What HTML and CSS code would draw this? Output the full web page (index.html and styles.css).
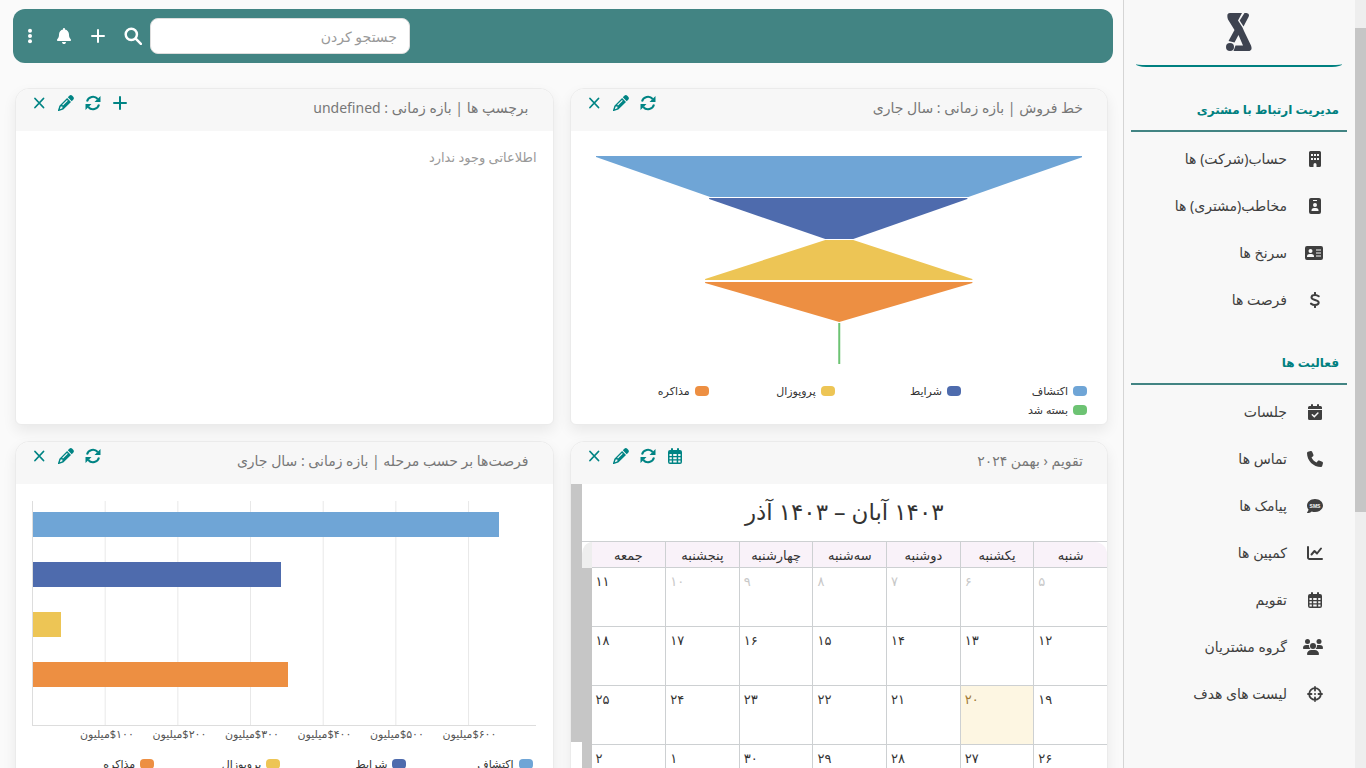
FILE: index.html
```html
<!DOCTYPE html>
<html lang="fa" dir="rtl">
<head>
<meta charset="utf-8">
<title>داشبورد</title>
<link rel="stylesheet" href="styles.css">
</head>
<body>
<svg class="sprite" aria-hidden="true">
  <symbol id="close" viewBox="0 0 16 16"><path d="M4 3.500l8.500 9M12.500 3.500l-8.500 9" fill="none" stroke="currentColor" stroke-width="1.800" stroke-linecap="round"/></symbol>
  <symbol id="pen" viewBox="0 0 16 16"><path fill-rule="evenodd" d="M11.300.8a2.200 2.200 0 0 1 3 0l.9.900a2.200 2.200 0 0 1 0 3l-1.500 1.500L9.800 2.300zM9.100 3l3.900 3.900-7.700 7.700L.8 16a.6.600 0 0 1-.8-.8L1.400 10.700zM2.700 11.600l-.9 2.600 2.600-.9v-1.700zM9 5L4.200 9.800l.8.800L9.800 5.800z"/></symbol>
  <symbol id="sync" viewBox="0 0 16 16"><path d="M2 6.500A6.200 6.200 0 0 1 12.700 4M14 9.500A6.200 6.200 0 0 1 3.300 12" fill="none" stroke="currentColor" stroke-width="2"/><path d="M15.500 1v6H9.500zM.5 15V9h6z"/></symbol>
  <symbol id="plus" viewBox="0 0 16 16"><path d="M8 2v12M2 8h12" fill="none" stroke="currentColor" stroke-width="2" stroke-linecap="round"/></symbol>
  <symbol id="search" viewBox="0 0 16 16"><path d="M11.500 6.500a5 5 0 1 1-10 0 5 5 0 0 1 10 0zM10.400 10.400L15 15" fill="none" stroke="currentColor" stroke-width="2.200" stroke-linecap="round"/></symbol>
  <symbol id="dots" viewBox="0 0 16 16"><circle cx="8" cy="2.800" r="2"/><circle cx="8" cy="8" r="2"/><circle cx="8" cy="13.200" r="2"/></symbol>
  <symbol id="bell" viewBox="-32 0 512 512"><path d="M224 0c-17.700 0-32 14.300-32 32l0 19.200C119 66 64 130.600 64 208l0 18.800c0 47-17.300 92.400-48.500 127.600l-7.400 8.300c-8.400 9.400-10.400 22.900-5.300 34.400S19.400 416 32 416l384 0c12.600 0 24-7.400 29.200-18.900s3.100-25-5.300-34.400l-7.400-8.300C401.300 319.200 384 273.900 384 226.800l0-18.800c0-77.400-55-142-128-156.800L256 32c0-17.700-14.300-32-32-32zm45.300 493.300c12-12 18.700-28.300 18.700-45.300l-128 0c0 17 6.700 33.300 18.700 45.300s28.300 18.700 45.300 18.700s33.300-6.700 45.300-18.700z"/></symbol>
  <symbol id="building" viewBox="0 0 16 16"><path fill-rule="evenodd" d="M3.500 0h9A1.500 1.500 0 0 1 14 1.500v13a1.500 1.500 0 0 1-1.500 1.500H9.500v-2.500a1.500 1.500 0 0 0-3 0V16h-3A1.500 1.500 0 0 1 2 14.500v-13A1.500 1.500 0 0 1 3.500 0zM4 3v2h2V3zM7 3v2h2V3zM10 3v2h2V3zM4 7v2h2V7zM7 7v2h2V7zM10 7v2h2V7z"/></symbol>
  <symbol id="badge" viewBox="0 0 16 16"><path fill-rule="evenodd" d="M4 0h8a2 2 0 0 1 2 2v12a2 2 0 0 1-2 2H4a2 2 0 0 1-2-2V2a2 2 0 0 1 2-2zM6 2v1h4V2zM8 5a2 2 0 1 0 0 4 2 2 0 0 0 0-4zM7 10a2.500 2.500 0 0 0-2.500 2.500V13h7v-.5A2.500 2.500 0 0 0 9 10z"/></symbol>
  <symbol id="idcard" viewBox="0 0 18 16"><path fill-rule="evenodd" d="M2 1h14a2 2 0 0 1 2 2v10a2 2 0 0 1-2 2H2a2 2 0 0 1-2-2V3a2 2 0 0 1 2-2zM5.500 4a2 2 0 1 0 0 4 2 2 0 0 0 0-4zM4.500 9A2.500 2.500 0 0 0 2 11.500v.5h7v-.5A2.500 2.500 0 0 0 6.500 9zM11 4.500v1h5v-1zM11 7.500v1h5v-1zM11 10.500v1h5v-1z"/></symbol>
  <symbol id="dollar" viewBox="0 0 16 16"><path d="M8 .8v2.200M8 13v2.200M11.700 4.300C10.500 3.300 9.500 3 8 3 6 3 4.500 3.800 4.500 5.400c0 3.300 7.200 1.700 7.200 5.200C11.700 12.200 10 13 8 13c-1.500 0-3-.6-4-1.400" fill="none" stroke="currentColor" stroke-width="2" stroke-linecap="round"/></symbol>
  <symbol id="calcheck" viewBox="0 0 16 16"><path d="M5 0a1 1 0 0 1 1 1v1h4V1a1 1 0 0 1 2 0v1h1.500A1.500 1.500 0 0 1 15 3.500V5H1V3.500A1.500 1.500 0 0 1 2.500 2H4V1a1 1 0 0 1 1-1zM1 6h14v8.500a1.500 1.500 0 0 1-1.500 1.500h-11A1.500 1.500 0 0 1 1 14.500z"/><path class="cut" d="M5.300 10.800l2 2 3.600-3.700" stroke-width="1.500" stroke-linecap="round"/></symbol>
  <symbol id="phone" viewBox="0 0 512 512"><path d="M164.900 24.600c-7.700-18.600-28-28.500-47.400-23.200l-88 24C12.100 30.200 0 46 0 64C0 311.400 200.600 512 448 512c18 0 33.800-12.100 38.600-29.500l24-88c5.300-19.400-4.600-39.700-23.200-47.400l-96-40c-16.300-6.800-35.200-2.100-46.300 11.600L304.700 368C234.300 334.700 177.300 277.700 144 207.300L193.300 167c13.700-11.200 18.400-30 11.600-46.300l-40-96z"/></symbol>
  <symbol id="sms" viewBox="0 0 16 16"><path d="M8 1c4.400 0 8 2.900 8 6.500S12.400 14 8 14c-1.200 0-2.300-.2-3.300-.6C3.600 14.300 2 15 .4 15c-.4 0-.5-.4-.3-.7.600-.6 1.300-1.700 1.400-2.700C.6 10.500 0 9 0 7.500 0 3.900 3.600 1 8 1z"/><text class="sms-text" x="8" y="9.500">SMS</text></symbol>
  <symbol id="chart" viewBox="0 0 16 16"><path d="M1 2v10.500A1.500 1.500 0 0 0 2.500 14H15M4.500 9.500l3-3.500L10 8.500l4-5" fill="none" stroke="currentColor" stroke-width="2" stroke-linecap="round" stroke-linejoin="round"/></symbol>
  <symbol id="cal" viewBox="0 0 16 16"><path fill-rule="evenodd" d="M5 0a1 1 0 0 1 1 1v1h4V1a1 1 0 0 1 2 0v1h1a2 2 0 0 1 2 2v10a2 2 0 0 1-2 2H3a2 2 0 0 1-2-2V4a2 2 0 0 1 2-2h1V1a1 1 0 0 1 1-1zM2.500 6v2h2.300V6zM6.200 6v2h3.500V6zM11.200 6v2h2.300V6zM2.500 9.300v2h2.300v-2zM6.200 9.300v2h3.500v-2zM11.200 9.300v2h2.300v-2zM2.500 12.600v2h2.300v-2zM6.200 12.600v2h3.500v-2zM11.200 12.600v2h2.300v-2z"/></symbol>
  <symbol id="users" viewBox="0 0 20 16"><circle cx="4.500" cy="2.500" r="2.500"/><circle cx="16" cy="2.500" r="2.500"/><circle cx="10" cy="7" r="3"/><path d="M0 9.300A3.300 3.300 0 0 1 3.300 6h1.400c.5 0 1 .1 1.400.3A4 4 0 0 0 7.300 10H.7a.7.700 0 0 1-.7-.7zM20 9.300A3.300 3.300 0 0 0 16.700 6h-1.400c-.5 0-1 .1-1.400.3A4 4 0 0 1 12.700 10h6.600a.7.700 0 0 0 .7-.7zM4 15.200A4.200 4.200 0 0 1 8.200 11h3.600A4.200 4.200 0 0 1 16 15.200a.8.800 0 0 1-.8.800H4.800a.8.800 0 0 1-.8-.8z"/></symbol>
  <symbol id="target" viewBox="0 0 16 16"><path d="M13.800 8A5.800 5.800 0 1 1 2.200 8a5.800 5.800 0 0 1 11.600 0zM8 1v3.500M8 11.500V15M1 8h3.500M11.500 8H15" fill="none" stroke="currentColor" stroke-width="1.800" stroke-linecap="round"/><circle cx="8" cy="8" r="1"/></symbol>
</svg>
<div class="page-scroll"><div class="page-thumb"></div></div>
<aside class="sidebar">
  <div class="brand">
    <svg class="logo" viewBox="0 0 26 38"><path d="M4 0h12l-4 7.500 4.500 7L18 18l7 14.500Q27 38 22 38H7.500l2-5.500H17L12.500 22 8.500 29.500 2.500 28l6-11L2 6.500Q0 0 4 0z"/><path d="M18.500 0q6-.5 4 4l-5 9.500-3.800-6z"/><circle cx="4" cy="34" r="4"/></svg>
  </div>
  <nav>
    <h2>مدیریت ارتباط با مشتری</h2>
    <a href="#"><svg><use href="#building"/></svg>حساب(شرکت) ها</a>
    <a href="#"><svg><use href="#badge"/></svg>مخاطب(مشتری) ها</a>
    <a href="#"><svg class="wide"><use href="#idcard"/></svg>سرنخ ها</a>
    <a href="#"><svg><use href="#dollar"/></svg>فرصت ها</a>
    <h2>فعالیت ها</h2>
    <a href="#"><svg><use href="#calcheck"/></svg>جلسات</a>
    <a href="#"><svg><use href="#phone"/></svg>تماس ها</a>
    <a href="#"><svg><use href="#sms"/></svg>پیامک ها</a>
    <a href="#"><svg><use href="#chart"/></svg>کمپین ها</a>
    <a href="#"><svg><use href="#cal"/></svg>تقویم</a>
    <a href="#"><svg class="wider"><use href="#users"/></svg>گروه مشتریان</a>
    <a href="#"><svg><use href="#target"/></svg>لیست های هدف</a>
  </nav>
</aside>
<main>
  <header class="topbar">
    <input type="search" placeholder="جستجو کردن" aria-label="جستجو کردن">
    <button aria-label="جستجو"><svg class="wide"><use href="#search"/></svg></button>
    <button aria-label="افزودن"><svg><use href="#plus"/></svg></button>
    <button aria-label="اعلان ها"><svg><use href="#bell"/></svg></button>
    <button aria-label="منو"><svg><use href="#dots"/></svg></button>
  </header>
  <div class="cards">
    <section class="card">
      <div class="card-head"><h3>خط فروش | بازه زمانی : سال جاری</h3>
        <div class="tools"><button aria-label="تازه سازی"><svg><use href="#sync"/></svg></button><button aria-label="ویرایش"><svg><use href="#pen"/></svg></button><button aria-label="بستن"><svg><use href="#close"/></svg></button></div></div>
      <svg class="funnel" viewBox="0 0 486 208" preserveAspectRatio="none">
        <path fill="#6fa5d6" d="M0 0h486v1L372 41H114L0 1z"/><path fill="#4e6bad" d="M113 42h258v1L257 83h-28L113 43z"/><path fill="#edc555" d="M229 84h28l119 39v1H109v-1z"/><path fill="#ed8f42" d="M109 126h267v1L243 166 109 127z"/><path fill="#6dc373" d="M242 167h2v41h-2z"/>
      </svg>
      <ul class="legend"><li class="c1">اکتشاف</li><li class="c2">شرایط</li><li class="c3">پروپوزال</li><li class="c4">مذاکره</li><li class="c5">بسته شد</li></ul>
    </section>
    <section class="card">
      <div class="card-head"><h3>برچسپ ها | بازه زمانی : undefined</h3>
        <div class="tools"><button aria-label="افزودن"><svg><use href="#plus"/></svg></button><button aria-label="تازه سازی"><svg><use href="#sync"/></svg></button><button aria-label="ویرایش"><svg><use href="#pen"/></svg></button><button aria-label="بستن"><svg><use href="#close"/></svg></button></div></div>
      <p class="empty">اطلاعاتی وجود ندارد</p>
    </section>
    <section class="card">
      <div class="card-head"><h3>تقویم ‹ بهمن ۲۰۲۴</h3>
        <div class="tools"><button aria-label="تقویم"><svg><use href="#cal"/></svg></button><button aria-label="تازه سازی"><svg><use href="#sync"/></svg></button><button aria-label="ویرایش"><svg><use href="#pen"/></svg></button><button aria-label="بستن"><svg><use href="#close"/></svg></button></div></div>
      <div class="calendar">
        <div class="cal-main">
          <h4>۱۴۰۳ آبان – ۱۴۰۳ آذر</h4>
          <div class="cal-grid">
            <table>
              <thead><tr><th>شنبه</th><th>یکشنبه</th><th>دوشنبه</th><th>سه‌شنبه</th><th>چهارشنبه</th><th>پنجشنبه</th><th>جمعه</th></tr></thead>
              <tbody>
                <tr><td class="past">۵</td><td class="past">۶</td><td class="past">۷</td><td class="past">۸</td><td class="past">۹</td><td class="past">۱۰</td><td>۱۱</td></tr>
                <tr><td>۱۲</td><td>۱۳</td><td>۱۴</td><td>۱۵</td><td>۱۶</td><td>۱۷</td><td>۱۸</td></tr>
                <tr><td>۱۹</td><td class="today">۲۰</td><td>۲۱</td><td>۲۲</td><td>۲۳</td><td>۲۴</td><td>۲۵</td></tr>
                <tr><td>۲۶</td><td>۲۷</td><td>۲۸</td><td>۲۹</td><td>۳۰</td><td>۱</td><td>۲</td></tr>
              </tbody>
            </table>
            <div class="cal-gutter"><div class="cal-corner"></div></div>
          </div>
        </div>
        <div class="cal-scroll"></div>
      </div>
    </section>
    <section class="card">
      <div class="card-head"><h3>فرصت‌ها بر حسب مرحله | بازه زمانی : سال جاری</h3>
        <div class="tools"><button aria-label="تازه سازی"><svg><use href="#sync"/></svg></button><button aria-label="ویرایش"><svg><use href="#pen"/></svg></button><button aria-label="بستن"><svg><use href="#close"/></svg></button></div></div>
      <div class="plot">
        <div class="bar c1" style="width:92.7%"></div><div class="bar c2" style="width:49.3%"></div><div class="bar c3" style="width:5.5%"></div><div class="bar c4" style="width:50.7%"></div>
      </div>
      <div class="axis"><span>$۱۰۰میلیون</span><span>$۲۰۰میلیون</span><span>$۳۰۰میلیون</span><span>$۴۰۰میلیون</span><span>$۵۰۰میلیون</span><span>$۶۰۰میلیون</span></div>
      <ul class="legend"><li class="c1">اکتشاف</li><li class="c2">شرایط</li><li class="c3">پروپوزال</li><li class="c4">مذاکره</li><li class="c5">بسته شد</li></ul>
    </section>
  </div>
</main>
</body>
</html>
```
FILE: styles.css
```css
* { box-sizing: border-box; }
body {
  margin: 0;
  display: flex;
  height: 100vh;
  overflow: hidden;
  background: #fafafa;
  color: #333;
  font-family: "Noto Sans", "DejaVu Sans", sans-serif;
  font-size: 13px;
}
h2, h3, h4, p, ul { margin: 0; padding: 0; }
button { border: 0; padding: 0; background: none; color: inherit; display: flex; }
svg { width: 16px; height: 16px; fill: currentColor; flex: none; }
.sprite { display: none; }

.page-scroll { width: 11px; flex: none; background: #eee; padding-top: 28px; }
.page-thumb { height: 484px; background: #c6c6c6; }

.sidebar { width: 232px; flex: none; background: #f8f8f8; border-left: 1px solid #d5d5d5; padding: 0 8px 0 7px; }
.brand { margin: 0 5px; height: 67px; padding-top: 13px; text-align: center; border-bottom: 2px solid #008080; border-radius: 0 0 10px 10px / 0 0 3px 3px; }
.logo { width: 26px; height: 38px; fill: #3e4350; }
.sidebar h2 {
  height: 65px;
  margin-bottom: 3px;
  padding: 33px 8px 0;
  border-bottom: 2px solid #428483;
  color: #008080;
  font-size: 12px;
  line-height: 20px;
}
.sidebar a + h2 { padding-top: 30px; height: 62px; }
.sidebar a { display: flex; align-items: center; gap: 20px; height: 47px; padding-right: 24px; color: #3f3f3f; font-size: 14px; line-height: 20px; text-decoration: none; }
.wide { width: 18px; height: 18px; }
.wider { width: 20px; }
.sidebar .wide { margin-left: -2px; height: 16px; }
.sidebar .wider { margin-left: -4px; }
.cut { fill: none; stroke: #f8f8f8; }
.sms-text { fill: #f8f8f8; font: bold 5px "Liberation Sans", sans-serif; text-anchor: middle; direction: ltr; }

main { flex: 1; min-width: 0; padding: 9px 10px 0 13px; }
.topbar { display: flex; align-items: center; justify-content: flex-end; gap: 18px; height: 54px; padding: 0 9px; border-radius: 12px; background: #428483; color: #fff; }
.topbar input {
  width: 260px;
  height: 36px;
  margin-left: -10px;
  padding: 0 12px;
  border: 1px solid #ddd;
  border-radius: 8px;
  background: #fff;
  font: inherit;
  font-size: 14px;
}
.topbar input::placeholder { color: #999; opacity: 1; }

.cards { display: grid; grid-template-columns: 1fr 1fr; gap: 16px; padding: 25px 5px 0 2px; }
.card { height: 337px; overflow: hidden; background: #fff; border: 1px solid #ebebeb; border-radius: 14px 14px 6px 6px; box-shadow: 0 6px 14px rgba(0, 0, 0, .07); }
.card-head { display: flex; justify-content: space-between; height: 42px; padding: 6px 24px 0 15px; background: #f7f7f7; }
.card-head h3 { color: #777; font-size: 14px; font-weight: 400; line-height: 26px; }
.tools { display: flex; gap: 11px; color: #008484; }
.funnel { display: block; width: calc(100% - 50px); height: 208px; margin: 25px 25px 0; }
.legend { display: grid; grid-template-columns: repeat(4, 1fr); margin: 17px 20px 0 12px; list-style: none; font-size: 11px; line-height: 19px; }
.legend li { display: flex; align-items: center; gap: 5px; }
.legend li::before { content: ""; width: 14px; height: 10px; border-radius: 4px; background: var(--c); }
.c1 { --c: #6fa5d6; }
.c2 { --c: #4e6bad; }
.c3 { --c: #edc555; }
.c4 { --c: #ed8f42; }
.c5 { --c: #6dc373; }
.empty { padding: 16px 16px 0; color: #999; line-height: 20px; }

.calendar { display: flex; }
.cal-scroll { width: 11px; height: 258px; background: #c6c6c6; }
.cal-main { flex: 1; }
.cal-main h4 { height: 58px; border-bottom: 1px solid #cdd0d2; text-align: center; font-size: 23px; font-weight: 400; line-height: 54px; }
.cal-grid { display: flex; }
table { flex: 1; width: 100%; table-layout: fixed; border-collapse: separate; border-spacing: 0; }
th { height: 26px; padding: 0; background: #f9f2f9; font-weight: 400; font-size: 13px; line-height: 20px; }
th:first-child { border-top-right-radius: 12px; }
th, td { border-bottom: 1px solid #cdd0d2; border-left: 1px solid #cdd0d2; }
th:last-child, td:last-child { border-left: 0; }
td { height: 59px; padding: 3px 4px; vertical-align: top; text-align: left; line-height: 20px; }
.past { color: #c8c8c8; }
.today { background: #fdf6e2; color: #a07a35; }
.cal-gutter { width: 10px; flex: none; background: linear-gradient(#fff 26px, #c6c6c6 26px); }
.cal-corner { height: 26px; border-top-left-radius: 10px 12px; background: #eee; }

.plot {
  direction: ltr;
  display: flex;
  flex-direction: column;
  gap: 25px;
  height: 225px;
  margin: 17px 17px 0 16px;
  padding-top: 11px;
  border-left: 1px solid #ddd;
  border-bottom: 1px solid #ddd;
  background: linear-gradient(to left, #e8e8e8 1px, transparent 1px) 0 0 / 14.45% 100%;
}
.bar { height: 25px; background: var(--c); }
.axis { direction: ltr; display: flex; margin: 0 17px 0 16px; padding-left: 7.2%; font-size: 11px; line-height: 16px; color: #555; }
.axis span { flex: 0 0 15.6%; direction: rtl; text-align: center; white-space: nowrap; }
.axis + .legend { margin-top: 12px; }
```
